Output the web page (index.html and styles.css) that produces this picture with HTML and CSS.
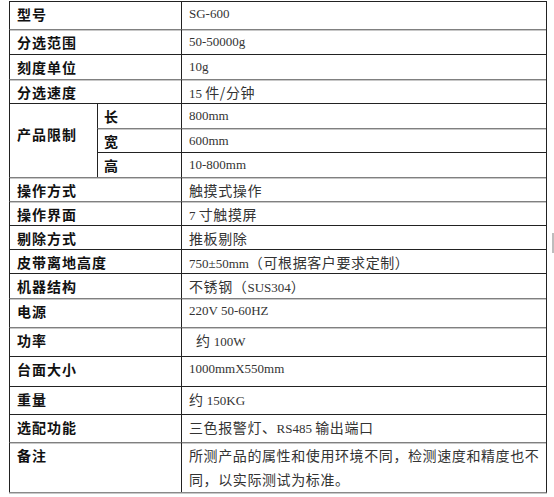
FILE: index.html
```html
<!DOCTYPE html>
<html lang="zh-CN">
<head>
<meta charset="utf-8">
<title>规格参数</title>
<link rel="stylesheet" href="styles.css">
</head>
<body>
<table class="spec">
  <colgroup><col class="c1"><col class="c2"><col class="c3"></colgroup>
  <tbody>
    <tr class="r28"><th colspan="2">型号</th><td>SG-600</td></tr>
    <tr class="r25 g"><th colspan="2">分选范围</th><td>50-50000g</td></tr>
    <tr class="r25"><th colspan="2">刻度单位</th><td>10g</td></tr>
    <tr class="r24 g"><th colspan="2">分选速度</th><td>15 <span class="cn">件/分钟</span></td></tr>
    <tr class="r25"><th rowspan="3" class="group">产品限制</th><th class="sub">长</th><td>800mm</td></tr>
    <tr class="r24 g"><th class="sub">宽</th><td>600mm</td></tr>
    <tr class="r25"><th class="sub">高</th><td>10-800mm</td></tr>
    <tr class="r24 g"><th colspan="2">操作方式</th><td><span class="cn">触摸式操作</span></td></tr>
    <tr class="r24 g"><th colspan="2">操作界面</th><td>7 <span class="cn">寸触摸屏</span></td></tr>
    <tr class="r24"><th colspan="2">剔除方式</th><td><span class="cn">推板剔除</span></td></tr>
    <tr class="r24"><th colspan="2">皮带离地高度</th><td>750±50mm<span class="cn">（可根据客户要求定制）</span></td></tr>
    <tr class="r25"><th colspan="2">机器结构</th><td><span class="cn">不锈钢（</span>SUS304<span class="cn">）</span></td></tr>
    <tr class="r29 g"><th colspan="2">电源</th><td>220V 50-60HZ</td></tr>
    <tr class="r29 g"><th colspan="2">功率</th><td class="indent"><span class="cn">约</span> 100W</td></tr>
    <tr class="r30"><th colspan="2">台面大小</th><td>1000mmX550mm</td></tr>
    <tr class="r28"><th colspan="2">重量</th><td><span class="cn">约</span> 150KG</td></tr>
    <tr class="r28"><th colspan="2">选配功能</th><td><span class="cn">三色报警灯、</span>RS485 <span class="cn">输出端口</span></td></tr>
    <tr class="r49 g"><th colspan="2">备注</th><td class="note"><span class="cn">所测产品的属性和使用环境不同，检测速度和精度也不<br>同，以实际测试为标准。</span></td></tr>
  </tbody>
</table>
<div class="mark"></div>
</body>
</html>
```

FILE: styles.css
```css
html, body {
  margin: 0;
  padding: 0;
  background: #ffffff;
}

body {
  position: relative;
  width: 554px;
  height: 497px;
  overflow: hidden;
}

.spec {
  margin: 1px 0 0 9px;
  border-collapse: separate;
  border-spacing: 0;
  table-layout: fixed;
  width: 538px;
  border-right: 1px solid #222222;
  border-bottom: 1px solid #8a8a8a;
  box-shadow: 0 1px 0 #c8c8c8;
}

.c1 { width: 88px; }
.c2 { width: 84px; }
.c3 { width: 365px; }

.spec th,
.spec td {
  border-top: 1px solid #222222;
  border-left: 1px solid #222222;
  vertical-align: top;
  text-align: left;
  padding: 3px 0 0 7px;
  line-height: 18px;
}

.spec tr.g > th,
.spec tr.g > td {
  border-top-color: #808080;
  box-shadow: inset 0 1px 0 #c8c8c8;
}

.spec th {
  font-family: "Noto Sans CJK SC", "Noto Sans", sans-serif;
  font-weight: 700;
  font-size: 14px;
  letter-spacing: 1px;
  color: #111111;
}

.spec th.sub {
  padding-left: 6px;
}

.spec th.group {
  padding-top: 21px;
}

.spec td {
  font-family: "Liberation Serif", "Noto Sans CJK SC", serif;
  font-weight: 400;
  font-size: 13px;
  color: #333333;
}

.spec td.indent {
  padding-left: 14px;
}

.spec td.note {
  line-height: 22px;
  padding-top: 1px;
}

.cn {
  font-family: "Noto Sans CJK SC", sans-serif;
  font-size: 14px;
  letter-spacing: 0.6px;
}

.r24 { height: 24px; }
.r25 { height: 25px; }
.r28 { height: 28px; }
.r29 { height: 29px; }
.r30 { height: 30px; }
.r49 { height: 49px; }

.mark {
  position: absolute;
  left: 552px;
  top: 233px;
  width: 2px;
  height: 20px;
  background: #bdbdbd;
}
```
